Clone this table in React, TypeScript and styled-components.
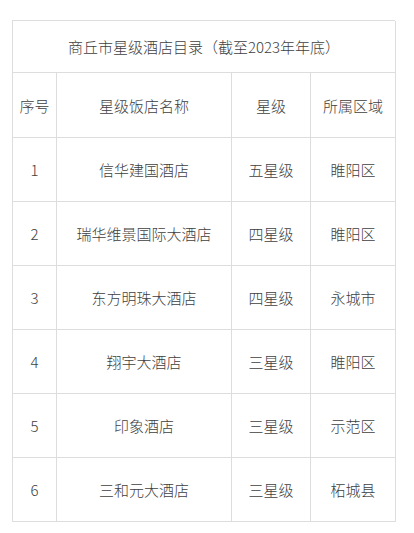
import React from "react";
import styled, { createGlobalStyle } from "styled-components";

const Global = createGlobalStyle`
  html, body { margin: 0; padding: 0; background: #ffffff; }
  body { font-family: "Noto Sans CJK SC", "Noto Sans", sans-serif; }
`;

const Page = styled.div`
  padding: 20px 0 0 12px;
`;

const Grid = styled.div`
  display: grid;
  width: 383px;
  grid-template-columns: 44px 175px 79px 85px;
  grid-template-rows: 52px 65px repeat(6, 64px);
  border-top: 1px solid #dddddd;
  border-left: 1px solid #dddddd;
  box-sizing: border-box;
`;

const Cell = styled.div<{ $span?: number }>`
  grid-column: ${(p) => (p.$span ? `span ${p.$span}` : "auto")};
  box-sizing: border-box;
  border-right: 1px solid #dddddd;
  border-bottom: 1px solid #dddddd;
  display: flex;
  align-items: center;
  justify-content: center;
  font-size: 15px;
  font-weight: 300;
  color: #404040;
  white-space: nowrap;
  text-align: center;
`;

const rows = [
  ["1", "信华建国酒店", "五星级", "睢阳区"],
  ["2", "瑞华维景国际大酒店", "四星级", "睢阳区"],
  ["3", "东方明珠大酒店", "四星级", "永城市"],
  ["4", "翔宇大酒店", "三星级", "睢阳区"],
  ["5", "印象酒店", "三星级", "示范区"],
  ["6", "三和元大酒店", "三星级", "柘城县"],
];

export default function App() {
  return (
    <>
      <Global />
      <Page>
        <Grid>
          <Cell $span={4}>商丘市星级酒店目录（截至2023年年底）</Cell>
          <Cell>序号</Cell>
          <Cell>星级饭店名称</Cell>
          <Cell>星级</Cell>
          <Cell>所属区域</Cell>
          {rows.map((r) =>
            r.map((c, i) => <Cell key={r[0] + "-" + i}>{c}</Cell>)
          )}
        </Grid>
      </Page>
    </>
  );
}
